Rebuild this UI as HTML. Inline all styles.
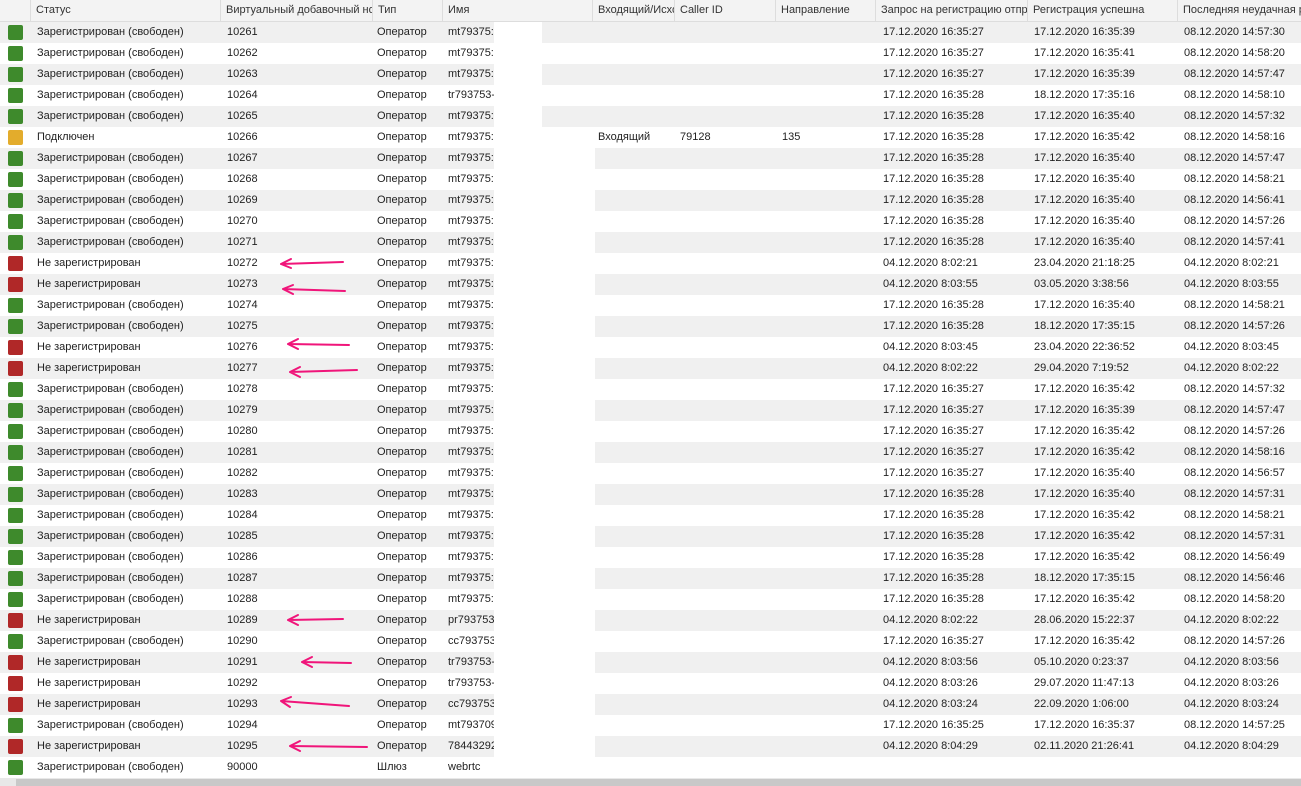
<!DOCTYPE html>
<html><head><meta charset="utf-8">
<style>
body{margin:0;width:1301px;height:786px;overflow:hidden;background:#fff;font-family:"Liberation Sans",Arial,sans-serif;font-size:11px;color:#222;position:relative}
.hd{position:absolute;left:0;top:0;width:1301px;height:21px;background:#f3f3f3;border-bottom:1px solid #ddd}
.hd span{position:absolute;top:0;height:21px;line-height:21px;padding-left:5px;border-left:1px solid #ddd;white-space:nowrap;overflow:hidden;box-sizing:border-box;color:#333}
.r{position:absolute;left:0;width:1301px;height:21px;line-height:21px}
.r.g{background:#f0f0f0}
.r span{position:absolute;top:0;white-space:nowrap}
.ic{position:absolute;left:8px;top:3px;width:15px;height:15px;border-radius:2px}
.G{background:#3e8a2c}.R{background:#b02828}.Y{background:#e3ac2c}
.nm{overflow:hidden}
.wb{position:absolute;top:0;height:21px;background:#fff}
.sb{position:absolute;left:0;top:778px;width:1301px;height:8px;background:#e8e8e8}
.sb div{position:absolute;left:16px;top:1px;width:1285px;height:7px;background:#c8c8c8}
</style></head><body>
<div class="hd">
<span style="left:30px;width:190px">Статус</span>
<span style="left:220px;width:152px">Виртуальный добавочный номер</span>
<span style="left:372px;width:70px">Тип</span>
<span style="left:442px;width:150px">Имя</span>
<span style="left:592px;width:82px">Входящий/Исходящий</span>
<span style="left:674px;width:101px">Caller ID</span>
<span style="left:775px;width:100px">Направление</span>
<span style="left:875px;width:152px">Запрос на регистрацию отправлен</span>
<span style="left:1027px;width:150px">Регистрация успешна</span>
<span style="left:1177px;width:124px">Последняя неудачная регистрация</span>
</div>
<div id="rows">
<div class="r g" style="top:22px"><div class="ic G"></div><span style="left:37px">Зарегистрирован (свободен)</span><span style="left:227px">10261</span><span style="left:377px">Оператор</span><span class="nm" style="left:448px;width:12px;width:46px">mt79375:</span><div class="wb" style="left:494px;width:48px"></div><span style="left:883px">17.12.2020 16:35:27</span><span style="left:1034px">17.12.2020 16:35:39</span><span style="left:1184px">08.12.2020 14:57:30</span></div>
<div class="r" style="top:43px"><div class="ic G"></div><span style="left:37px">Зарегистрирован (свободен)</span><span style="left:227px">10262</span><span style="left:377px">Оператор</span><span class="nm" style="left:448px;width:46px">mt79375:</span><span style="left:883px">17.12.2020 16:35:27</span><span style="left:1034px">17.12.2020 16:35:41</span><span style="left:1184px">08.12.2020 14:58:20</span></div>
<div class="r g" style="top:64px"><div class="ic G"></div><span style="left:37px">Зарегистрирован (свободен)</span><span style="left:227px">10263</span><span style="left:377px">Оператор</span><span class="nm" style="left:448px;width:46px">mt79375:</span><div class="wb" style="left:494px;width:48px"></div><span style="left:883px">17.12.2020 16:35:27</span><span style="left:1034px">17.12.2020 16:35:39</span><span style="left:1184px">08.12.2020 14:57:47</span></div>
<div class="r" style="top:85px"><div class="ic G"></div><span style="left:37px">Зарегистрирован (свободен)</span><span style="left:227px">10264</span><span style="left:377px">Оператор</span><span class="nm" style="left:448px;width:46px">tr793753-</span><span style="left:883px">17.12.2020 16:35:28</span><span style="left:1034px">18.12.2020 17:35:16</span><span style="left:1184px">08.12.2020 14:58:10</span></div>
<div class="r g" style="top:106px"><div class="ic G"></div><span style="left:37px">Зарегистрирован (свободен)</span><span style="left:227px">10265</span><span style="left:377px">Оператор</span><span class="nm" style="left:448px;width:46px">mt79375:</span><div class="wb" style="left:494px;width:48px"></div><span style="left:883px">17.12.2020 16:35:28</span><span style="left:1034px">17.12.2020 16:35:40</span><span style="left:1184px">08.12.2020 14:57:32</span></div>
<div class="r" style="top:127px"><div class="ic Y"></div><span style="left:37px">Подключен</span><span style="left:227px">10266</span><span style="left:377px">Оператор</span><span class="nm" style="left:448px;width:46px">mt79375:</span><span style="left:598px">Входящий</span><span style="left:680px">79128</span><span style="left:782px">135</span><span style="left:883px">17.12.2020 16:35:28</span><span style="left:1034px">17.12.2020 16:35:42</span><span style="left:1184px">08.12.2020 14:58:16</span></div>
<div class="r g" style="top:148px"><div class="ic G"></div><span style="left:37px">Зарегистрирован (свободен)</span><span style="left:227px">10267</span><span style="left:377px">Оператор</span><span class="nm" style="left:448px;width:46px">mt79375:</span><div class="wb" style="left:494px;width:101px"></div><span style="left:883px">17.12.2020 16:35:28</span><span style="left:1034px">17.12.2020 16:35:40</span><span style="left:1184px">08.12.2020 14:57:47</span></div>
<div class="r" style="top:169px"><div class="ic G"></div><span style="left:37px">Зарегистрирован (свободен)</span><span style="left:227px">10268</span><span style="left:377px">Оператор</span><span class="nm" style="left:448px;width:46px">mt79375:</span><span style="left:883px">17.12.2020 16:35:28</span><span style="left:1034px">17.12.2020 16:35:40</span><span style="left:1184px">08.12.2020 14:58:21</span></div>
<div class="r g" style="top:190px"><div class="ic G"></div><span style="left:37px">Зарегистрирован (свободен)</span><span style="left:227px">10269</span><span style="left:377px">Оператор</span><span class="nm" style="left:448px;width:46px">mt79375:</span><div class="wb" style="left:494px;width:101px"></div><span style="left:883px">17.12.2020 16:35:28</span><span style="left:1034px">17.12.2020 16:35:40</span><span style="left:1184px">08.12.2020 14:56:41</span></div>
<div class="r" style="top:211px"><div class="ic G"></div><span style="left:37px">Зарегистрирован (свободен)</span><span style="left:227px">10270</span><span style="left:377px">Оператор</span><span class="nm" style="left:448px;width:46px">mt79375:</span><span style="left:883px">17.12.2020 16:35:28</span><span style="left:1034px">17.12.2020 16:35:40</span><span style="left:1184px">08.12.2020 14:57:26</span></div>
<div class="r g" style="top:232px"><div class="ic G"></div><span style="left:37px">Зарегистрирован (свободен)</span><span style="left:227px">10271</span><span style="left:377px">Оператор</span><span class="nm" style="left:448px;width:46px">mt79375:</span><div class="wb" style="left:494px;width:101px"></div><span style="left:883px">17.12.2020 16:35:28</span><span style="left:1034px">17.12.2020 16:35:40</span><span style="left:1184px">08.12.2020 14:57:41</span></div>
<div class="r" style="top:253px"><div class="ic R"></div><span style="left:37px">Не зарегистрирован</span><span style="left:227px">10272</span><span style="left:377px">Оператор</span><span class="nm" style="left:448px;width:46px">mt79375:</span><span style="left:883px">04.12.2020 8:02:21</span><span style="left:1034px">23.04.2020 21:18:25</span><span style="left:1184px">04.12.2020 8:02:21</span></div>
<div class="r g" style="top:274px"><div class="ic R"></div><span style="left:37px">Не зарегистрирован</span><span style="left:227px">10273</span><span style="left:377px">Оператор</span><span class="nm" style="left:448px;width:46px">mt79375:</span><div class="wb" style="left:494px;width:101px"></div><span style="left:883px">04.12.2020 8:03:55</span><span style="left:1034px">03.05.2020 3:38:56</span><span style="left:1184px">04.12.2020 8:03:55</span></div>
<div class="r" style="top:295px"><div class="ic G"></div><span style="left:37px">Зарегистрирован (свободен)</span><span style="left:227px">10274</span><span style="left:377px">Оператор</span><span class="nm" style="left:448px;width:46px">mt79375:</span><span style="left:883px">17.12.2020 16:35:28</span><span style="left:1034px">17.12.2020 16:35:40</span><span style="left:1184px">08.12.2020 14:58:21</span></div>
<div class="r g" style="top:316px"><div class="ic G"></div><span style="left:37px">Зарегистрирован (свободен)</span><span style="left:227px">10275</span><span style="left:377px">Оператор</span><span class="nm" style="left:448px;width:46px">mt79375:</span><div class="wb" style="left:494px;width:101px"></div><span style="left:883px">17.12.2020 16:35:28</span><span style="left:1034px">18.12.2020 17:35:15</span><span style="left:1184px">08.12.2020 14:57:26</span></div>
<div class="r" style="top:337px"><div class="ic R"></div><span style="left:37px">Не зарегистрирован</span><span style="left:227px">10276</span><span style="left:377px">Оператор</span><span class="nm" style="left:448px;width:46px">mt79375:</span><span style="left:883px">04.12.2020 8:03:45</span><span style="left:1034px">23.04.2020 22:36:52</span><span style="left:1184px">04.12.2020 8:03:45</span></div>
<div class="r g" style="top:358px"><div class="ic R"></div><span style="left:37px">Не зарегистрирован</span><span style="left:227px">10277</span><span style="left:377px">Оператор</span><span class="nm" style="left:448px;width:46px">mt79375:</span><div class="wb" style="left:494px;width:101px"></div><span style="left:883px">04.12.2020 8:02:22</span><span style="left:1034px">29.04.2020 7:19:52</span><span style="left:1184px">04.12.2020 8:02:22</span></div>
<div class="r" style="top:379px"><div class="ic G"></div><span style="left:37px">Зарегистрирован (свободен)</span><span style="left:227px">10278</span><span style="left:377px">Оператор</span><span class="nm" style="left:448px;width:46px">mt79375:</span><span style="left:883px">17.12.2020 16:35:27</span><span style="left:1034px">17.12.2020 16:35:42</span><span style="left:1184px">08.12.2020 14:57:32</span></div>
<div class="r g" style="top:400px"><div class="ic G"></div><span style="left:37px">Зарегистрирован (свободен)</span><span style="left:227px">10279</span><span style="left:377px">Оператор</span><span class="nm" style="left:448px;width:46px">mt79375:</span><div class="wb" style="left:494px;width:101px"></div><span style="left:883px">17.12.2020 16:35:27</span><span style="left:1034px">17.12.2020 16:35:39</span><span style="left:1184px">08.12.2020 14:57:47</span></div>
<div class="r" style="top:421px"><div class="ic G"></div><span style="left:37px">Зарегистрирован (свободен)</span><span style="left:227px">10280</span><span style="left:377px">Оператор</span><span class="nm" style="left:448px;width:46px">mt79375:</span><span style="left:883px">17.12.2020 16:35:27</span><span style="left:1034px">17.12.2020 16:35:42</span><span style="left:1184px">08.12.2020 14:57:26</span></div>
<div class="r g" style="top:442px"><div class="ic G"></div><span style="left:37px">Зарегистрирован (свободен)</span><span style="left:227px">10281</span><span style="left:377px">Оператор</span><span class="nm" style="left:448px;width:46px">mt79375:</span><div class="wb" style="left:494px;width:101px"></div><span style="left:883px">17.12.2020 16:35:27</span><span style="left:1034px">17.12.2020 16:35:42</span><span style="left:1184px">08.12.2020 14:58:16</span></div>
<div class="r" style="top:463px"><div class="ic G"></div><span style="left:37px">Зарегистрирован (свободен)</span><span style="left:227px">10282</span><span style="left:377px">Оператор</span><span class="nm" style="left:448px;width:46px">mt79375:</span><span style="left:883px">17.12.2020 16:35:27</span><span style="left:1034px">17.12.2020 16:35:40</span><span style="left:1184px">08.12.2020 14:56:57</span></div>
<div class="r g" style="top:484px"><div class="ic G"></div><span style="left:37px">Зарегистрирован (свободен)</span><span style="left:227px">10283</span><span style="left:377px">Оператор</span><span class="nm" style="left:448px;width:46px">mt79375:</span><div class="wb" style="left:494px;width:101px"></div><span style="left:883px">17.12.2020 16:35:28</span><span style="left:1034px">17.12.2020 16:35:40</span><span style="left:1184px">08.12.2020 14:57:31</span></div>
<div class="r" style="top:505px"><div class="ic G"></div><span style="left:37px">Зарегистрирован (свободен)</span><span style="left:227px">10284</span><span style="left:377px">Оператор</span><span class="nm" style="left:448px;width:46px">mt79375:</span><span style="left:883px">17.12.2020 16:35:28</span><span style="left:1034px">17.12.2020 16:35:42</span><span style="left:1184px">08.12.2020 14:58:21</span></div>
<div class="r g" style="top:526px"><div class="ic G"></div><span style="left:37px">Зарегистрирован (свободен)</span><span style="left:227px">10285</span><span style="left:377px">Оператор</span><span class="nm" style="left:448px;width:46px">mt79375:</span><div class="wb" style="left:494px;width:101px"></div><span style="left:883px">17.12.2020 16:35:28</span><span style="left:1034px">17.12.2020 16:35:42</span><span style="left:1184px">08.12.2020 14:57:31</span></div>
<div class="r" style="top:547px"><div class="ic G"></div><span style="left:37px">Зарегистрирован (свободен)</span><span style="left:227px">10286</span><span style="left:377px">Оператор</span><span class="nm" style="left:448px;width:46px">mt79375:</span><span style="left:883px">17.12.2020 16:35:28</span><span style="left:1034px">17.12.2020 16:35:42</span><span style="left:1184px">08.12.2020 14:56:49</span></div>
<div class="r g" style="top:568px"><div class="ic G"></div><span style="left:37px">Зарегистрирован (свободен)</span><span style="left:227px">10287</span><span style="left:377px">Оператор</span><span class="nm" style="left:448px;width:46px">mt79375:</span><div class="wb" style="left:494px;width:101px"></div><span style="left:883px">17.12.2020 16:35:28</span><span style="left:1034px">18.12.2020 17:35:15</span><span style="left:1184px">08.12.2020 14:56:46</span></div>
<div class="r" style="top:589px"><div class="ic G"></div><span style="left:37px">Зарегистрирован (свободен)</span><span style="left:227px">10288</span><span style="left:377px">Оператор</span><span class="nm" style="left:448px;width:46px">mt79375:</span><span style="left:883px">17.12.2020 16:35:28</span><span style="left:1034px">17.12.2020 16:35:42</span><span style="left:1184px">08.12.2020 14:58:20</span></div>
<div class="r g" style="top:610px"><div class="ic R"></div><span style="left:37px">Не зарегистрирован</span><span style="left:227px">10289</span><span style="left:377px">Оператор</span><span class="nm" style="left:448px;width:46px">pr793753</span><div class="wb" style="left:494px;width:101px"></div><span style="left:883px">04.12.2020 8:02:22</span><span style="left:1034px">28.06.2020 15:22:37</span><span style="left:1184px">04.12.2020 8:02:22</span></div>
<div class="r" style="top:631px"><div class="ic G"></div><span style="left:37px">Зарегистрирован (свободен)</span><span style="left:227px">10290</span><span style="left:377px">Оператор</span><span class="nm" style="left:448px;width:46px">cc793753</span><span style="left:883px">17.12.2020 16:35:27</span><span style="left:1034px">17.12.2020 16:35:42</span><span style="left:1184px">08.12.2020 14:57:26</span></div>
<div class="r g" style="top:652px"><div class="ic R"></div><span style="left:37px">Не зарегистрирован</span><span style="left:227px">10291</span><span style="left:377px">Оператор</span><span class="nm" style="left:448px;width:46px">tr793753-</span><div class="wb" style="left:494px;width:101px"></div><span style="left:883px">04.12.2020 8:03:56</span><span style="left:1034px">05.10.2020 0:23:37</span><span style="left:1184px">04.12.2020 8:03:56</span></div>
<div class="r" style="top:673px"><div class="ic R"></div><span style="left:37px">Не зарегистрирован</span><span style="left:227px">10292</span><span style="left:377px">Оператор</span><span class="nm" style="left:448px;width:46px">tr793753-</span><span style="left:883px">04.12.2020 8:03:26</span><span style="left:1034px">29.07.2020 11:47:13</span><span style="left:1184px">04.12.2020 8:03:26</span></div>
<div class="r g" style="top:694px"><div class="ic R"></div><span style="left:37px">Не зарегистрирован</span><span style="left:227px">10293</span><span style="left:377px">Оператор</span><span class="nm" style="left:448px;width:46px">cc793753</span><div class="wb" style="left:494px;width:101px"></div><span style="left:883px">04.12.2020 8:03:24</span><span style="left:1034px">22.09.2020 1:06:00</span><span style="left:1184px">04.12.2020 8:03:24</span></div>
<div class="r" style="top:715px"><div class="ic G"></div><span style="left:37px">Зарегистрирован (свободен)</span><span style="left:227px">10294</span><span style="left:377px">Оператор</span><span class="nm" style="left:448px;width:46px">mt793709</span><span style="left:883px">17.12.2020 16:35:25</span><span style="left:1034px">17.12.2020 16:35:37</span><span style="left:1184px">08.12.2020 14:57:25</span></div>
<div class="r g" style="top:736px"><div class="ic R"></div><span style="left:37px">Не зарегистрирован</span><span style="left:227px">10295</span><span style="left:377px">Оператор</span><span class="nm" style="left:448px;width:46px">78443292</span><div class="wb" style="left:494px;width:101px"></div><span style="left:883px">04.12.2020 8:04:29</span><span style="left:1034px">02.11.2020 21:26:41</span><span style="left:1184px">04.12.2020 8:04:29</span></div>
<div class="r" style="top:757px"><div class="ic G"></div><span style="left:37px">Зарегистрирован (свободен)</span><span style="left:227px">90000</span><span style="left:377px">Шлюз</span><span class="nm" style="left:448px;width:46px">webrtc</span></div>
</div>
<svg style="position:absolute;left:0;top:0" width="1301" height="786" fill="none" stroke="#f0157a" stroke-width="2" stroke-linecap="round">
<path d="M343 262 L281 264 M281 264 L291 259 M281 264 L291 268"/>
<path d="M345 291 L283 289 M283 289 L293 285 M283 289 L293 294"/>
<path d="M349 345 L288 344 M288 344 L298 339 M288 344 L298 349"/>
<path d="M357 370 L290 372 M290 372 L300 367 M290 372 L300 377"/>
<path d="M343 619 L288 620 M288 620 L298 615 M288 620 L298 625"/>
<path d="M351 663 L302 662 M302 662 L312 657 M302 662 L312 667"/>
<path d="M349 706 L281 701 M281 701 L291 697 M281 701 L290 707"/>
<path d="M367 747 L290 746 M290 746 L300 741 M290 746 L300 751"/>
</svg>
<div class="sb"><div></div></div>
</body></html>
